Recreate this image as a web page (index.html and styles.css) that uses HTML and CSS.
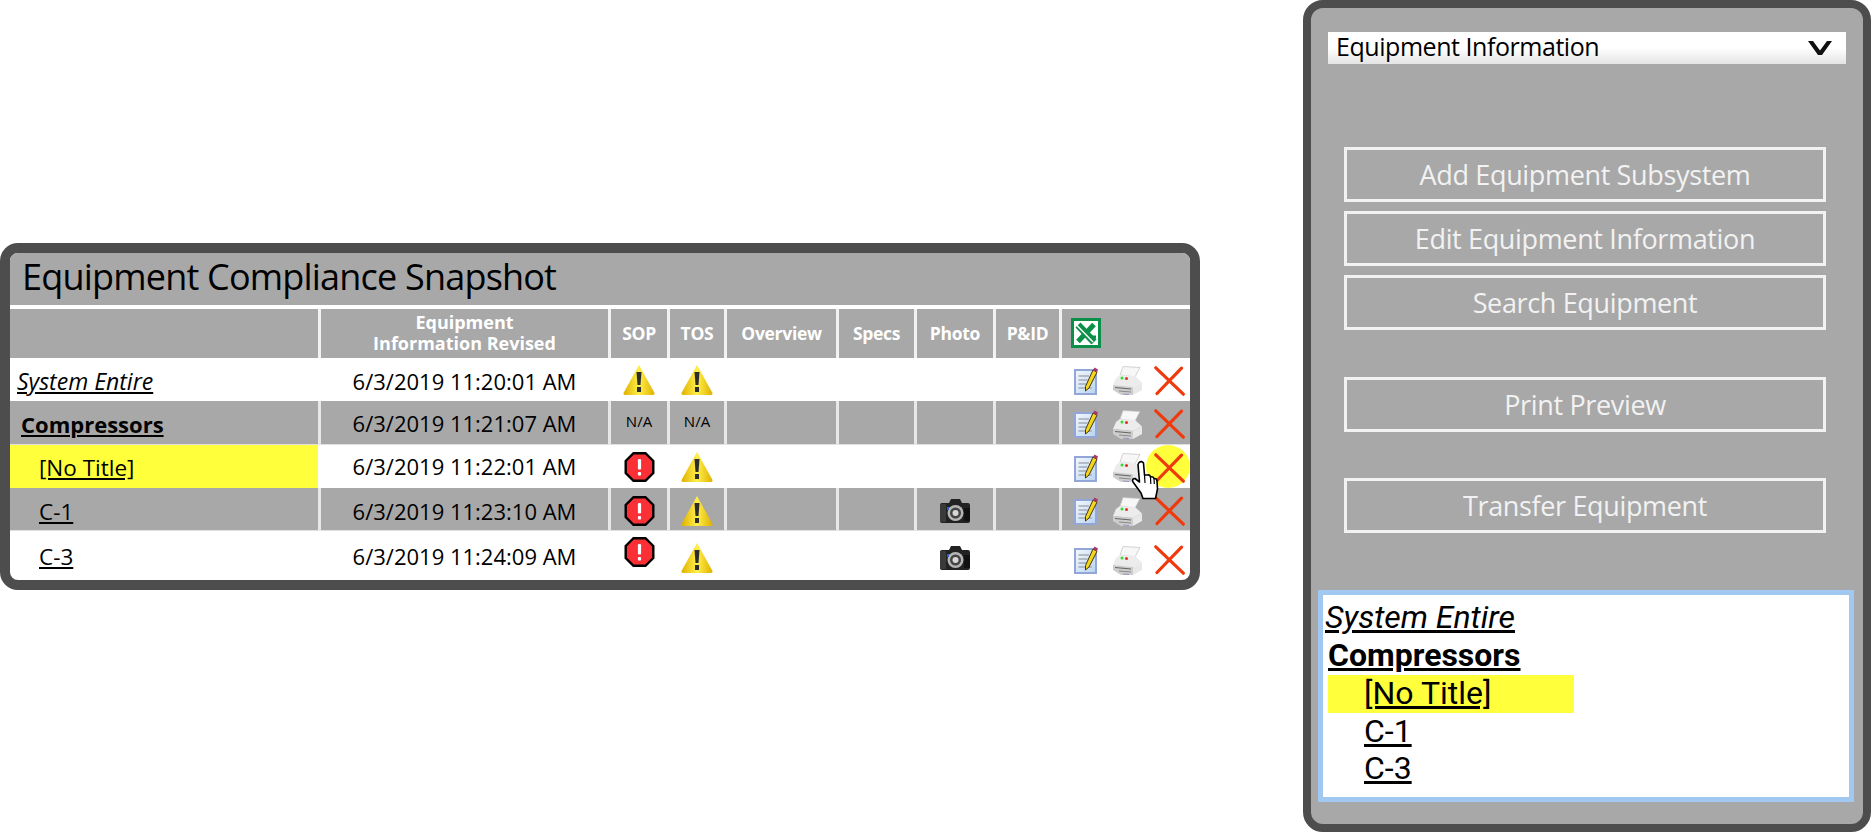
FILE: index.html
```html
<!DOCTYPE html>
<html lang="en">
<head>
  <meta charset="UTF-8" />
  <title>Equipment Compliance Snapshot</title>
  <link rel="stylesheet" href="styles.css">
</head>
<body>
  <svg class="defs" width="0" height="0">
    <defs>
      <linearGradient id="warnFill" x1="0" y1="0" x2="1" y2="0">
        <stop offset="0" stop-color="#e0b000"/>
        <stop offset="0.5" stop-color="#fff04a"/>
        <stop offset="1" stop-color="#e0b000"/>
      </linearGradient>
      <linearGradient id="noteFill" x1="0" y1="0" x2="1" y2="1">
        <stop offset="0" stop-color="#f4f8fd"/>
        <stop offset="1" stop-color="#b8d4f0"/>
      </linearGradient>
      <symbol id="warn" viewBox="0 0 32 30">
        <path d="M16 0 L31.500 28 Q32 30 30 30 L2 30 Q0 30 .5 28 Z" fill="url(#warnFill)"/>
        <path d="M13.500 7 H18.500 L17.500 20 H14.500 Z" fill="#2c2c2c"/>
        <rect x="14" y="22" width="4" height="5" fill="#2c2c2c"/>
      </symbol>
      <symbol id="stop" viewBox="0 0 30 30">
        <path d="M9 1.200 H21 L28.800 9 V21 L21 28.800 H9 L1.200 21 V9 Z" fill="#fb3036" stroke="#000" stroke-width="2.400"/>
        <rect x="13.400" y="7" width="3.200" height="10.500" rx="1.200" fill="#fff"/>
        <rect x="13.400" y="20" width="3.200" height="3.400" rx="1" fill="#fff"/>
      </symbol>
      <symbol id="note" viewBox="0 0 24 28">
        <rect x="1" y="3" width="21" height="24" fill="url(#noteFill)" stroke="#93a6da" stroke-width="2"/>
        <path d="M4.500 9 H15 M4.500 13 H13.500 M4.500 17 H12 M4.500 21 H18" stroke="#a4acb6" stroke-width="1.600"/>
        <path d="M19 3 L23 5.200 L15 21 L11.500 24 L11.500 19.500 Z" fill="#f5d51a" stroke="#3f3518" stroke-width="1"/>
        <path d="M19 3 L20.500 0.500 L24 2.500 L23 5.200 Z" fill="#a8386a"/>
      </symbol>
      <symbol id="printer" viewBox="0 0 30 29">
        <path d="M7 9 L10 0.500 L27 1.500 L22 11 Z" fill="#f7f7f7" stroke="#c2c2c2" stroke-width="0.700"/>
        <path d="M3 12 L7 9 L22 10 L29 16.500 L20 21 L0 19 Z" fill="#ececec"/>
        <path d="M0 19 L20 21 V29 H8 L0 24 Z" fill="#cdcdcd"/>
        <path d="M20 21 L29 16.500 V24 L20 29 Z" fill="#e8e8e8"/>
        <path d="M2 21.500 L18 23" stroke="#666" stroke-width="1.200"/>
        <path d="M6 25 L18 26" stroke="#8a8a8a" stroke-width="1.200"/>
        <path d="M10 28 L16 28.500" stroke="#9d93c9" stroke-width="1.200"/>
        <circle cx="9" cy="12" r="1.500" fill="#2fe02f"/>
        <circle cx="13.500" cy="12.500" r="1.500" fill="#e02f2f"/>
      </symbol>
      <symbol id="cross" viewBox="0 0 31 30">
        <path d="M1.800 1.800 L29.300 28.200 M27.500 2.200 L3 27.500" stroke="#ee3a0c" stroke-width="3.200" stroke-linecap="round"/>
      </symbol>
      <symbol id="camera" viewBox="0 0 32 26">
        <path d="M10 5 L12 1 H21 L23 5 H29 Q31 5 31 7 V23 Q31 25 29 25 H3 Q1 25 1 23 V7 Q1 5 3 5 Z" fill="#222"/>
        <rect x="1" y="6" width="6" height="18" fill="#3a3a3a"/>
        <rect x="25" y="10" width="6" height="13" fill="#111"/>
        <circle cx="16.500" cy="15" r="8" fill="#b5b5b5"/>
        <circle cx="16.500" cy="15" r="5.500" fill="#444"/>
        <circle cx="16.500" cy="15" r="3" fill="#d8d8d8"/>
        <rect x="8" y="9" width="2" height="3" fill="#2a62c0"/>
      </symbol>
      <symbol id="excel" viewBox="0 0 30 30">
        <rect x="1.500" y="1.500" width="27" height="27" fill="#fff" stroke="#0a9048" stroke-width="3"/>
        <path d="M7 7 L23 24" stroke="#0a9048" stroke-width="7"/>
        <path d="M23 6.500 L7 23.500" stroke="#0a9048" stroke-width="5"/>
        <path d="M16 19 H25" stroke="#0a9048" stroke-width="3"/>
        <path d="M5.500 7 L22 24" stroke="#fff" stroke-width="1.500"/>
      </symbol>
      <symbol id="hand" viewBox="0 0 28 40">
        <path d="M8 2.500 Q10.500 0.500 12.500 3 L13.500 15 L16.500 15 Q19 14.500 19.500 17 Q22 16 23 18.500 Q25.500 18 26 21 L26.500 29 L24.500 38.500 L12 38.500 L10 33 L2 22 Q0.500 18.500 4 18.500 L8.500 22 L7 4.500 Z" fill="#fff" stroke="#000" stroke-width="1.600" stroke-linejoin="round"/>
        <path d="M13.500 15 L14 23 M19.500 17 L19.800 24 M23 18.500 L23.300 24" stroke="#000" stroke-width="1.200"/>
      </symbol>
    </defs>
  </svg>

  <section class="snapshot">
    <h1 class="snapshot-title">Equipment Compliance Snapshot</h1>
    <table class="grid">
      <colgroup>
        <col class="c-name"><col class="c-date"><col class="c-sop"><col class="c-tos"><col class="c-over"><col class="c-specs"><col class="c-photo"><col class="c-pid"><col class="c-act">
      </colgroup>
      <thead>
        <tr>
          <th></th>
          <th class="head-date">Equipment<br>Information Revised</th>
          <th>SOP</th>
          <th>TOS</th>
          <th>Overview</th>
          <th>Specs</th>
          <th>Photo</th>
          <th>P&amp;ID</th>
          <th class="export"><svg class="ic-excel"><use href="#excel"/></svg></th>
        </tr>
      </thead>
      <tbody>
        <tr class="row-a">
          <td class="name name-root"><a href="#">System Entire</a></td>
          <td class="date">6/3/2019 11:20:01 AM</td>
          <td class="mark"><svg class="ic-warn"><use href="#warn"/></svg></td>
          <td class="mark"><svg class="ic-warn"><use href="#warn"/></svg></td>
          <td></td><td></td><td></td><td></td>
          <td class="actions">
            <div class="action-row">
              <svg class="ic-note"><use href="#note"/></svg>
              <svg class="ic-printer"><use href="#printer"/></svg>
              <svg class="ic-cross"><use href="#cross"/></svg>
            </div>
          </td>
        </tr>
        <tr class="shaded tall">
          <td class="name name-group"><a href="#">Compressors</a></td>
          <td class="date">6/3/2019 11:21:07 AM</td>
          <td class="mark na">N/A</td>
          <td class="mark na">N/A</td>
          <td></td><td></td><td></td><td></td>
          <td class="actions">
            <div class="action-row">
              <svg class="ic-note"><use href="#note"/></svg>
              <svg class="ic-printer"><use href="#printer"/></svg>
              <svg class="ic-cross"><use href="#cross"/></svg>
            </div>
          </td>
        </tr>
        <tr class="row-sel">
          <td class="name name-child selected"><a href="#">[No Title]</a></td>
          <td class="date">6/3/2019 11:22:01 AM</td>
          <td class="mark"><svg class="ic-stop"><use href="#stop"/></svg></td>
          <td class="mark"><svg class="ic-warn"><use href="#warn"/></svg></td>
          <td></td><td></td><td></td><td></td>
          <td class="actions hover-cell">
            <span class="click-dot"></span>
            <div class="action-row">
              <svg class="ic-note"><use href="#note"/></svg>
              <svg class="ic-printer"><use href="#printer"/></svg>
              <svg class="ic-cross"><use href="#cross"/></svg>
            </div>
            <svg class="ic-hand"><use href="#hand"/></svg>
          </td>
        </tr>
        <tr class="row-b shaded">
          <td class="name name-child"><a href="#">C-1</a></td>
          <td class="date">6/3/2019 11:23:10 AM</td>
          <td class="mark"><svg class="ic-stop"><use href="#stop"/></svg></td>
          <td class="mark"><svg class="ic-warn"><use href="#warn"/></svg></td>
          <td></td><td></td>
          <td class="mark"><svg class="ic-camera"><use href="#camera"/></svg></td>
          <td></td>
          <td class="actions">
            <div class="action-row">
              <svg class="ic-note"><use href="#note"/></svg>
              <svg class="ic-printer"><use href="#printer"/></svg>
              <svg class="ic-cross"><use href="#cross"/></svg>
            </div>
          </td>
        </tr>
        <tr class="last">
          <td class="name name-child"><a href="#">C-3</a></td>
          <td class="date">6/3/2019 11:24:09 AM</td>
          <td class="mark"><svg class="ic-stop"><use href="#stop"/></svg></td>
          <td class="mark mark-low"><svg class="ic-warn"><use href="#warn"/></svg></td>
          <td></td><td></td>
          <td class="mark mark-cam"><svg class="ic-camera"><use href="#camera"/></svg></td>
          <td></td>
          <td class="actions">
            <div class="action-row">
              <svg class="ic-note"><use href="#note"/></svg>
              <svg class="ic-printer"><use href="#printer"/></svg>
              <svg class="ic-cross"><use href="#cross"/></svg>
            </div>
          </td>
        </tr>
      </tbody>
    </table>
  </section>

  <aside class="side">
    <div class="side-select">
      <span>Equipment Information</span>
      <svg class="chevron" viewBox="0 0 24 16"><path d="M0 1 H5 L12 10.500 L19 1 H24 L14 15 H10 Z" fill="#111"/></svg>
    </div>
    <div class="side-actions">
      <div class="btn-group">
        <a class="side-btn" href="#">Add Equipment Subsystem</a>
        <a class="side-btn" href="#">Edit Equipment Information</a>
        <a class="side-btn" href="#">Search Equipment</a>
      </div>
      <a class="side-btn" href="#">Print Preview</a>
      <a class="side-btn" href="#">Transfer Equipment</a>
    </div>
    <div class="tree">
      <a class="tree-root" href="#">System Entire</a>
      <a class="tree-group" href="#">Compressors</a>
      <div class="tree-child selected"><a href="#">[No Title]</a></div>
      <div class="tree-child"><a href="#">C-1</a></div>
      <div class="tree-child"><a href="#">C-3</a></div>
    </div>
  </aside>
</body>
</html>
```

FILE: styles.css
```css
:root {
  --gray: #a8a8a8;
  --frame: #4d4d4d;
  --hilite: #ffff3c;
}

* {
  margin: 0;
  padding: 0;
  box-sizing: border-box;
}

html,
body {
  height: 100%;
}

body {
  display: flex;
  align-items: flex-start;
  justify-content: space-between;
  overflow: hidden;
  background-color: #fff;
  color: #000;
  font-family: "Open Sans", "Noto Sans", sans-serif;
}

a {
  color: #000;
}

.defs {
  position: absolute;
}

/* left panel */
.snapshot {
  width: 1200px;
  height: 347px;
  margin-top: 243px;
  border: 10px solid var(--frame);
  border-radius: 18px;
  background-color: #fff;
  overflow: hidden;
}

.snapshot-title {
  height: 52px;
  padding-left: 12px;
  background-color: var(--gray);
  font-size: 36px;
  font-weight: 400;
  line-height: 47px;
  letter-spacing: -0.8px;
}

.grid {
  width: 1180px;
  margin-top: 4px;
  border-collapse: separate;
  border-spacing: 0;
  table-layout: fixed;
}

.c-name { width: 311px; }
.c-date { width: 290px; }
.c-sop { width: 59px; }
.c-tos { width: 57px; }
.c-over { width: 112px; }
.c-specs { width: 78px; }
.c-photo { width: 79px; }
.c-pid { width: 66px; }
.c-act { width: 128px; }

.grid th {
  height: 49px;
  padding-bottom: 1px;
  border-right: 3px solid #f2f2f2;
  background-color: var(--gray);
  color: #fff;
  font-size: 17.5px;
  font-weight: 700;
  line-height: 21px;
  letter-spacing: -0.3px;
}

.grid .head-date {
  font-size: 18px;
  letter-spacing: 0;
}

.grid th:last-child,
.grid td:last-child {
  border-right: 0;
}

.grid td {
  height: 43px;
  border-right: 3px solid #fff;
  padding: 0;
}

.grid .shaded td {
  border-right-color: #e8e8e8;
  border-bottom: 1px solid #e0e0e0;
  background-color: var(--gray);
}

.grid .tall td {
  height: 44px;
}

.grid .row-a .name,
.grid .row-a .date,
.grid .tall .name,
.grid .row-sel .name {
  padding-top: 2px;
}

.grid .row-sel .date {
  padding-bottom: 2px;
}

.grid .row-b .name,
.grid .row-b .date {
  padding-top: 4px;
}

.grid .actions {
  padding-top: 2px;
}

.grid .shaded .actions,
.grid .row-b .mark {
  padding-top: 4px;
}

.grid .tall .actions {
  padding-top: 3px;
}

.grid .tall .na {
  padding-bottom: 3px;
}

.grid .last td {
  height: 49px;
  vertical-align: top;
  padding-top: 6px;
}

.grid .last .name,
.grid .last .date {
  padding-top: 10px;
}

.grid .last .mark-low {
  padding-top: 12px;
}

.grid .last .mark-cam {
  padding-top: 14px;
}

.grid .last .actions {
  padding-top: 14px;
}

.export {
  padding-left: 9px;
  text-align: left;
}

.ic-excel {
  display: block;
  width: 30px;
  height: 30px;
}

.name {
  font-size: 22.5px;
}

.grid .name-root {
  padding-left: 7px;
  font-size: 23px;
  font-style: italic;
}

.grid .name-group {
  padding-left: 11px;
  font-size: 22px;
  font-weight: 700;
}

.grid .name-child {
  padding-left: 29px;
}

.selected {
  background-color: var(--hilite);
}

.date {
  font-size: 22px;
  text-align: center;
}

.mark {
  text-align: center;
  line-height: 0;
}

.na {
  font-size: 15px;
  line-height: 18px;
}

.ic-warn {
  width: 32px;
  height: 30px;
}

.ic-stop {
  width: 31px;
  height: 30px;
}

.ic-camera {
  width: 32px;
  height: 26px;
}

.action-row {
  display: flex;
  align-items: center;
  gap: 15px;
  padding-left: 12px;
}

.ic-note {
  width: 24px;
  height: 28px;
}

.ic-printer {
  width: 30px;
  height: 29px;
  margin-right: -4px;
}

.ic-cross {
  width: 31px;
  height: 30px;
}

.hover-cell {
  position: relative;
}

.click-dot {
  position: absolute;
  top: 0;
  right: 0;
  width: 44px;
  height: 43px;
  border-radius: 50%;
  background-color: var(--hilite);
}

.hover-cell .action-row {
  position: relative;
}

.ic-hand {
  position: absolute;
  top: 15px;
  left: 69px;
  z-index: 2;
  width: 28px;
  height: 40px;
}

/* right panel */
.side {
  display: flex;
  flex-direction: column;
  width: 568px;
  height: 832px;
  padding: 24px 10px 0 7px;
  border: 8px solid var(--frame);
  border-radius: 20px;
  background-color: var(--gray);
}

.side-select {
  display: flex;
  align-items: center;
  justify-content: space-between;
  width: 518px;
  height: 32px;
  margin-left: 10px;
  padding: 0 14px 5px 8px;
  background: linear-gradient(#fff 50%, #e4e4e4);
  font-size: 25px;
  letter-spacing: -0.45px;
}

.chevron {
  width: 24px;
  height: 16px;
  margin-top: 4px;
}

.side-actions {
  display: flex;
  flex-direction: column;
  gap: 46px;
  width: 482px;
  margin: 83px 0 0 26px;
}

.btn-group {
  display: flex;
  flex-direction: column;
  gap: 9px;
  margin-bottom: 1px;
}

.side-btn {
  display: block;
  height: 55px;
  border: 3px solid #f2f2f2;
  color: #f2f2f2;
  font-size: 27px;
  line-height: 49px;
  text-align: center;
  text-decoration: none;
  letter-spacing: -0.35px;
}

.tree {
  display: flex;
  flex-direction: column;
  align-items: flex-start;
  width: 536px;
  height: 212px;
  margin-top: 57px;
  padding: 3px 0 0 2px;
  border: 5px solid #a0c8f0;
  background-color: #fff;
  font-family: Roboto, sans-serif;
  font-size: 32px;
  line-height: 37px;
}

.tree-root {
  line-height: 38px;
  font-style: italic;
}

.tree-group {
  padding-left: 3px;
  line-height: 38px;
  font-weight: 700;
}

.tree-child {
  width: 246px;
  margin-left: 3px;
  padding-left: 36px;
}

.tree-child.selected {
  height: 38px;
  margin-top: 1px;
  line-height: 36px;
}
```
